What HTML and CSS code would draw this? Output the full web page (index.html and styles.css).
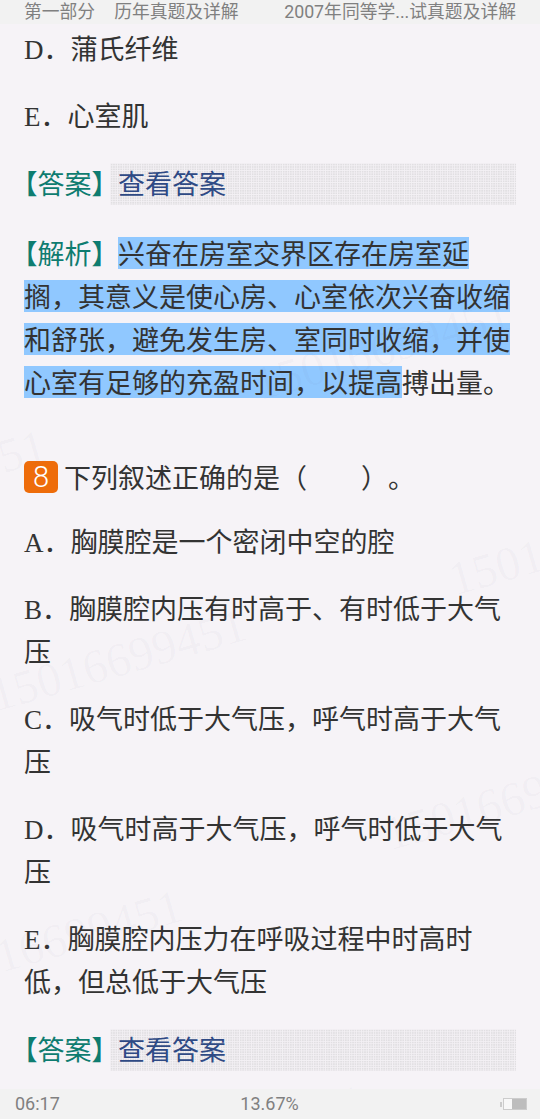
FILE: index.html
```html
<!DOCTYPE html>
<html lang="zh-CN">
<head>
<meta charset="utf-8">
<title>2007年同等学力试真题及详解</title>
<link rel="stylesheet" href="styles.css">
</head>
<body>
<div class="page">
  <header class="top">
    <div class="crumbs"><span>第一部分</span><span>历年真题及详解</span></div>
    <div>2007年同等学...试真题及详解</div>
  </header>
  <main class="content">
    <p class="line">D．蒲氏纤维</p>
    <p class="line">E．心室肌</p>
    <div class="answer"><span class="label">【答案】</span><span class="reveal">查看答案</span></div>
    <p class="line analysis"><span class="label gap">【解析】</span><span class="sel">兴奋在房室交界区存在房室延搁，其意义是使心房、心室依次兴奋收缩和舒张，避免发生房、室同时收缩，并使心室有足够的充盈时间，以提高</span>搏出量。</p>
    <p class="line question"><span class="num">8</span><span>下列叙述正确的是（　　）。</span></p>
    <p class="line">A．胸膜腔是一个密闭中空的腔</p>
    <p class="line">B．胸膜腔内压有时高于、有时低于大气压</p>
    <p class="line">C．吸气时低于大气压，呼气时高于大气压</p>
    <p class="line">D．吸气时高于大气压，呼气时低于大气压</p>
    <p class="line">E．胸膜腔内压力在呼吸过程中时高时低，但总低于大气压</p>
    <div class="answer"><span class="label">【答案】</span><span class="reveal">查看答案</span></div>
    <div class="wm wm1">15016699451</div>
    <div class="wm wm2">15016699451</div>
    <div class="wm wm3">15016699451</div>
    <div class="wm wm4">15016699451</div>
    <div class="wm wm5">15016699451</div>
    <div class="wm wm6">15016699451</div>
    <div class="wm wm7">15016699451</div>
  </main>
  <footer class="bottom">
    <span class="time">06:17</span>
    <span class="pct">13.67%</span>
    <span class="battery"><i class="nub"></i><i class="cell"><i class="level"></i></i></span>
  </footer>
</div>
</body>
</html>
```
FILE: styles.css
```css
* { box-sizing: border-box; }
html, body { margin: 0; padding: 0; }
body {
  width: 540px;
  height: 1119px;
  overflow: hidden;
  background: #f6f3f7;
  font-family: "Liberation Serif", "Noto Sans CJK SC", serif;
  color: #333;
  text-spacing-trim: space-all;
}
.page { height: 1119px; display: flex; flex-direction: column; }
.top {
  height: 24px;
  flex: none;
  padding: 0 24px;
  background: #f2f2f2;
  display: flex;
  justify-content: space-between;
  align-items: center;
  font: 17.8px/24px Roboto, "Noto Sans CJK SC", sans-serif;
  color: #808080;
}
.crumbs { display: flex; gap: 19px; }
.content {
  flex: 1;
  min-height: 0;
  position: relative;
  overflow: hidden;
  padding: 5px 24px 0;
}
.line {
  margin: 0 0 24px;
  font-size: 27px;
  line-height: 43px;
}
.answer {
  display: flex;
  align-items: flex-start;
  height: 42px;
  font-size: 27px;
  line-height: 40px;
  margin-bottom: 26px;
}
.label {
  color: #0e7c70;
  font-family: "Noto Sans CJK SC", sans-serif;
  font-feature-settings: "halt";
  width: 86px;
  flex: none;
}
.label.gap { display: inline-block; width: 94px; line-height: 43px; }
.reveal {
  flex: 1;
  height: 42px;
  padding-left: 8px;
  color: #2f4a85;
  font-family: "Noto Sans CJK SC", sans-serif;
  background-color: #e1dfe2;
  background-image:
    linear-gradient(#f3f0f4 1px, transparent 1px),
    linear-gradient(90deg, #f3f0f4 1px, transparent 1px);
  background-size: 2.4px 2.4px;
}
.analysis {
  font-family: "Noto Sans CJK SC", sans-serif;
  margin-bottom: 52px;
}
.sel {
  background: linear-gradient(#90c8ff, #90c8ff) center / 100% 32px no-repeat;
  -webkit-box-decoration-break: clone;
  box-decoration-break: clone;
}
.question {
  display: flex;
  align-items: center;
  font-family: "Noto Sans CJK SC", sans-serif;
}
.num {
  flex: none;
  width: 34px;
  height: 32px;
  margin-right: 6px;
  border-radius: 5px;
  background: #ee6c0a;
  color: #fff;
  font: 300 29px/32px Roboto, sans-serif;
  text-align: center;
}
.bottom {
  height: 30px;
  flex: none;
  background: #f2f2f2;
  position: relative;
  z-index: 1;
  padding: 0 15px;
  display: grid;
  grid-template-columns: 1fr auto 1fr;
  align-items: center;
  font: 18px/30px Roboto, sans-serif;
  color: #808080;
}
.pct { margin-left: -1px; }
.battery { justify-self: end; display: flex; align-items: center; margin-right: -2px; }
.nub { width: 2px; height: 5px; background: #ccc; margin-right: 1px; }
.cell {
  width: 24px;
  height: 12px;
  border: 1px solid #ccc;
  background: #f8f8f8;
  display: flex;
  justify-content: flex-end;
}
.level { width: 14px; background: #bdbdbd; }
.wm {
  position: absolute;
  font: 48px/1 "Liberation Serif", serif;
  color: rgba(110, 90, 130, 0.035);
  white-space: nowrap;
  transform: rotate(-16deg);
  pointer-events: none;
}
.wm1 { left: -14px; top: 612px; }
.wm2 { left: 445px; top: 496px; }
.wm3 { left: -214px; top: 433px; }
.wm4 { left: -78px; top: 893px; }
.wm5 { left: 380px; top: 751px; }
.wm6 { left: 250px; top: 301px; }
.wm7 { left: 106px; top: 1088px; }
```
